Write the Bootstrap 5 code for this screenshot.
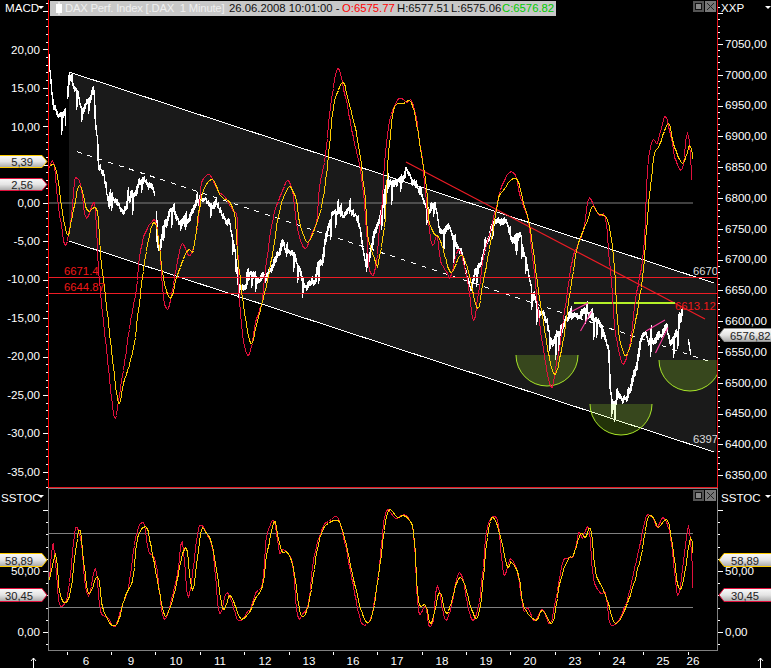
<!DOCTYPE html>
<html lang="de">
<head>
<meta charset="utf-8">
<title>DAX Perf. Index</title>
<link href="https://cdn.jsdelivr.net/npm/bootstrap@5.3.0/dist/css/bootstrap.min.css" rel="stylesheet">
<style>
html,body{margin:0;padding:0;background:#000;overflow:hidden}
body{font-family:"Liberation Sans",Arial,sans-serif}
.terminal{width:771px;height:668px;background:#000;color:#fff}
.terminal svg{display:block}
.pane-top{height:488px}
.pane-low{height:163px}
.scale-left{width:48px;flex:none}
.scale-right{width:53px;flex:none}
.plot-top{width:670px;flex:none;border-left:1px solid #f00;border-right:1px solid #e4141e;border-bottom:1px solid #e4141e}
.plot-low{width:670px;flex:none;border:1px solid #808080}
.time-axis{height:17px}
.info-bar{top:1px;left:1px;height:15px;width:506px;background:#c8c8c8;font-size:11.3px;line-height:15px;white-space:pre;color:#111}
.info-bar svg{flex:none;margin-left:6px;margin-right:2px}
.seg-name{width:164px;flex:none;color:#efefef;letter-spacing:-.22px}
.seg-date{width:113px;flex:none}
.seg-open{width:55px;flex:none;color:#f00}
.seg-high{width:54px;flex:none}
.seg-low{width:51px;flex:none}
.seg-close{color:#0c0}
.win-btns{top:1px;right:1px;gap:1px}
.ax{font-family:"Liberation Sans",Arial,sans-serif;font-size:11.6px;fill:#fff}
.ax-l{text-anchor:end}
.tag-t{font-family:"Liberation Sans",Arial,sans-serif;font-size:11.2px;fill:#222}
.note{font-family:"Liberation Sans",Arial,sans-serif;font-size:11.3px}
.note-r{fill:#f01818}
.note-w{fill:#ddd}
.crisp{shape-rendering:crispEdges}
.osc{stroke-linejoin:round}
</style>
</head>
<body>
<main class="terminal d-flex flex-column">
  <section class="pane-top d-flex">
    <aside class="scale-left">
      <svg width="48" height="488" viewBox="0 0 48 488">
        <defs>
          <linearGradient id="tg" x1="0" y1="0" x2="0" y2="1"><stop offset="0" stop-color="#fafafa"/><stop offset="0.5" stop-color="#e4e4e4"/><stop offset="1" stop-color="#a8a8a8"/></linearGradient>
        </defs>
        <g id="tL1" class="crisp" stroke="#fff" stroke-width="1"></g>
        <text class="ax" x="5" y="12">MACD</text>
        <path d="M38 6h6l-3 3z" fill="#fff"/>
        <text class="ax ax-l" x="40" y="54">20,00</text>
        <text class="ax ax-l" x="40" y="92">15,00</text>
        <text class="ax ax-l" x="40" y="131">10,00</text>
        <text class="ax ax-l" x="40" y="207">0,00</text>
        <text class="ax ax-l" x="40" y="245">-5,00</text>
        <text class="ax ax-l" x="40" y="283">-10,00</text>
        <text class="ax ax-l" x="40" y="322">-15,00</text>
        <text class="ax ax-l" x="40" y="360">-20,00</text>
        <text class="ax ax-l" x="40" y="399">-25,00</text>
        <text class="ax ax-l" x="40" y="437">-30,00</text>
        <text class="ax ax-l" x="40" y="476">-35,00</text>
        <path d="M-1 155.5H42L47 161.5 42 167.5H-1Z" fill="url(#tg)" stroke="#ffcc00"/>
        <text class="tag-t ax-l" x="33" y="166">5,39</text>
        <path d="M-1 178.5H42L47 184.5 42 190.5H-1Z" fill="url(#tg)" stroke="#e0103c"/>
        <text class="tag-t ax-l" x="33" y="189">2,56</text>
      </svg>
    </aside>
    <div class="plot-top position-relative">
      <svg width="668" height="487" viewBox="49 0 668 487">
        <polygon points="69,72 716,283.5 716,452.5 69,241" fill="#1a1a1a"/>
        <g fill="none">
          <path d="M49 203H693" stroke="#808080"/>
          <path id="px" stroke="#fff" stroke-width="1.7" class="crisp"/>
          <path d="M69 72L714 283" stroke="#fff" stroke-width="1" class="crisp"/>
          <path d="M69 241L714 452" stroke="#fff" stroke-width="1" class="crisp"/>
          <path d="M77 151.6L714 363" stroke="#fff" stroke-width="1" stroke-dasharray="5 6" class="crisp"/>
          <path d="M49 277.5H717M49 293.5H717" stroke="#ee1c25" class="crisp"/>
          <path d="M406 162L705 319" stroke="#ee1c25" stroke-width="1.2"/>
          <path d="M516 355H578A31 31 0 0 1 516 355Z" fill="#adff2f" fill-opacity=".2" stroke="none"/>
          <path d="M516 355A31 31 0 0 0 578 355" stroke="#a8e628"/>
          <path d="M590 404H652A31 31 0 0 1 590 404Z" fill="#adff2f" fill-opacity=".2" stroke="none"/>
          <path d="M590 404A31 31 0 0 0 652 404" stroke="#a8e628"/>
          <path d="M659 360H721A31 31 0 0 1 659 360Z" fill="#adff2f" fill-opacity=".2" stroke="none"/>
          <path d="M659 360A31 31 0 0 0 721 360" stroke="#a8e628"/>
          <path d="M574 302.500H675" stroke="#b4f028" stroke-width="2" class="crisp"/>
          <path d="M571.5 311.5L588 303M580.5 331L591.5 311.5M646 331L665 320M655.5 353L668 327.5" stroke="#ff3ca0" stroke-width="1.1"/>
          <path id="rm" stroke="#e0103c" stroke-width="1" class="crisp osc"/>
          <path id="ym" stroke="#ffcc00" stroke-width="1" class="crisp osc"/>
        </g>
        <text class="note note-r" x="64" y="275">6671.4</text>
        <text class="note note-r" x="64" y="291">6644.87</text>
        <text class="note note-r" x="675" y="310">6613.12</text>
        <text class="note note-w" x="693" y="275">6670</text>
        <text class="note note-w" x="693" y="443">6397</text>
      </svg>
      <div class="info-bar position-absolute d-flex align-items-center">
        <svg width="7" height="13" viewBox="0 0 7 13"><path d="M3 0V13" stroke="#fff"/><rect x="0" y="2" width="6" height="9" fill="#fff"/></svg>
        <span class="seg-name">DAX Perf. Index [.DAX  1 Minute]</span>
        <span class="seg-date">26.06.2008 10:01:00 - </span>
        <span class="seg-open">O:6575.77</span>
        <span class="seg-high">H:6577.51</span>
        <span class="seg-low">L:6575.06</span>
        <span class="seg-close">C:6576.82</span>
      </div>
      <div class="win-btns position-absolute d-flex">
        <svg width="11" height="11" viewBox="0 0 11 11"><rect width="11" height="11" fill="#555"/><rect x="2.5" y="2.5" width="6" height="6" fill="#888" stroke="#111"/></svg>
        <svg width="11" height="11" viewBox="0 0 11 11"><rect width="11" height="11" fill="#777"/><path d="M2 2L9 9M9 2L2 9" stroke="#222"/></svg>
      </div>
    </div>
    <aside class="scale-right">
      <svg width="53" height="488" viewBox="718 0 53 488">
        <g id="tR1" class="crisp" stroke="#fff" stroke-width="1"></g>
        <text class="ax" x="721" y="12">XXP</text>
        <path d="M765 6h6l-3 3z" fill="#fff"/>
        <text class="ax" x="725" y="48">7050,00</text>
        <text class="ax" x="725" y="79">7000,00</text>
        <text class="ax" x="725" y="109">6950,00</text>
        <text class="ax" x="725" y="140">6900,00</text>
        <text class="ax" x="725" y="171">6850,00</text>
        <text class="ax" x="725" y="202">6800,00</text>
        <text class="ax" x="725" y="233">6750,00</text>
        <text class="ax" x="725" y="263">6700,00</text>
        <text class="ax" x="725" y="294">6650,00</text>
        <text class="ax" x="725" y="325">6600,00</text>
        <text class="ax" x="725" y="356">6550,00</text>
        <text class="ax" x="725" y="387">6500,00</text>
        <text class="ax" x="725" y="417">6450,00</text>
        <text class="ax" x="725" y="448">6400,00</text>
        <text class="ax" x="725" y="479">6350,00</text>
        <path d="M772 328.5H724L719 335 724 341.5H772Z" fill="url(#tg)" stroke="#909090"/>
        <text class="tag-t" x="730" y="339.5">6576,82</text>
      </svg>
    </aside>
  </section>
  <section class="pane-low d-flex">
    <aside class="scale-left">
      <svg width="48" height="163" viewBox="0 488 48 163">
        <g id="tL2" class="crisp" stroke="#fff" stroke-width="1"></g>
        <text class="ax" x="1" y="502">SSTOC</text>
        <path d="M38 495h6l-3 3z" fill="#fff"/>
        <text class="ax ax-l" x="40" y="575">50,00</text>
        <text class="ax ax-l" x="40" y="636">0,00</text>
        <path d="M-1 553.5H42L47 560 42 566.5H-1Z" fill="url(#tg)" stroke="#ffcc00"/>
        <text class="tag-t ax-l" x="33" y="564.5">58,89</text>
        <path d="M-1 588.5H42L47 595 42 601.5H-1Z" fill="url(#tg)" stroke="#e0103c"/>
        <text class="tag-t ax-l" x="33" y="599.5">30,45</text>
      </svg>
    </aside>
    <div class="plot-low position-relative">
      <svg width="668" height="161" viewBox="49 489 668 161">
        <g fill="none">
          <path d="M49 533.5H693M49 607.5H693" stroke="#808080" class="crisp"/>
          <path id="rs" stroke="#e0103c" stroke-width="1" class="crisp osc"/>
          <path id="ys" stroke="#ffcc00" stroke-width="1" class="crisp osc"/>
        </g>
      </svg>
      <div class="win-btns position-absolute d-flex">
        <svg width="11" height="11" viewBox="0 0 11 11"><rect width="11" height="11" fill="#555"/><rect x="2.5" y="2.5" width="6" height="6" fill="#888" stroke="#111"/></svg>
        <svg width="11" height="11" viewBox="0 0 11 11"><rect width="11" height="11" fill="#777"/><path d="M2 2L9 9M9 2L2 9" stroke="#222"/></svg>
      </div>
    </div>
    <aside class="scale-right">
      <svg width="53" height="163" viewBox="718 488 53 163">
        <g id="tR2" class="crisp" stroke="#fff" stroke-width="1"></g>
        <text class="ax" x="721" y="502">SSTOC</text>
        <path d="M765 495h6l-3 3z" fill="#fff"/>
        <text class="ax" x="725" y="575">50,00</text>
        <text class="ax" x="725" y="636">0,00</text>
        <path d="M772 553.5H724L719 560 724 566.5H772Z" fill="url(#tg)" stroke="#ffcc00"/>
        <text class="tag-t" x="731" y="564.5">58,89</text>
        <path d="M772 588.5H724L719 595 724 601.5H772Z" fill="url(#tg)" stroke="#e0103c"/>
        <text class="tag-t" x="731" y="599.5">30,45</text>
      </svg>
    </aside>
  </section>
  <footer class="time-axis">
    <svg width="771" height="17" viewBox="0 651 771 17">
      <path class="crisp" stroke="#fff" d="M67.5 652v3M111.5 652v3M155.5 652v3M200.5 652v3M244.5 652v3M289.5 652v3M333.5 652v3M377.5 652v3M422.5 652v3M466.5 652v3M510.5 652v3M555.5 652v3M599.5 652v3M643.5 652v3M688.5 652v3"/>
      <g text-anchor="middle">
        <text class="ax" x="86" y="665">6</text>
        <text class="ax" x="131" y="665">9</text>
        <text class="ax" x="176" y="665">10</text>
        <text class="ax" x="220" y="665">11</text>
        <text class="ax" x="265" y="665">12</text>
        <text class="ax" x="309" y="665">13</text>
        <text class="ax" x="353" y="665">16</text>
        <text class="ax" x="397" y="665">17</text>
        <text class="ax" x="442" y="665">18</text>
        <text class="ax" x="486" y="665">19</text>
        <text class="ax" x="530" y="665">20</text>
        <text class="ax" x="575" y="665">23</text>
        <text class="ax" x="619" y="665">24</text>
        <text class="ax" x="663" y="665">25</text>
        <text class="ax" x="693" y="665">26</text>
      </g>
      <path d="M33.5 668V658M31 661l2.5-3 2.5 3M760.5 668V658M758 661l2.5-3 2.5 3" fill="none" stroke="#fff"/>
    </svg>
  </footer>
</main>
<script src="https://cdn.jsdelivr.net/npm/bootstrap@5.3.0/dist/js/bootstrap.bundle.min.js"></script>
<script>
(function(){
  /* Catmull-Rom through the traced points, snapped to whole pixels */
  function curve(a){
    var n=a.length/2,s='',px=null,py=null;
    function X(i){return a[2*Math.max(0,Math.min(n-1,i))];}
    function Y(i){return a[2*Math.max(0,Math.min(n-1,i))+1];}
    function cr(p0,p1,p2,p3,t){return 0.5*((2*p1)+(-p0+p2)*t+(2*p0-5*p1+4*p2-p3)*t*t+(-p0+3*p1-3*p2+p3)*t*t*t);}
    for(var i=0;i<n-1;i++){
      var steps=Math.max(1,Math.round((X(i+1)-X(i))/1.5));
      for(var k=0;k<steps;k++){
        var t=k/steps;
        var x=Math.round(cr(X(i-1),X(i),X(i+1),X(i+2),t))+.5;
        var y=Math.round(cr(Y(i-1),Y(i),Y(i+1),Y(i+2),t))+.5;
        if(x===px&&y===py)continue;
        s+=(s?'L':'M')+x+' '+y;px=x;py=y;
      }
    }
    return s+'L'+X(n-1)+' '+Y(n-1);
  }
  function set(id,a){document.getElementById(id).setAttribute('d',curve(a));}

  set('rm',[49,168,52,160,55,175,58,205,62,232,65,245,70,225,72,205,74,180,77,178,80,185,83,205,86,218,90,210,94,202,96,225,97,250,100,290,103,320,107,360,110,390,113,415,116,415,119,395,123,370,130,320,135,295,140,250,145,232,150,223,155,220,158,240,160,253,163,297,167,309,170,300,177,260,182,243,188,255,192,250,197,227,200,190,203,178,210,175,217,190,225,197,232,210,237,220,238,287,240,313,242,333,247,355,252,343,255,322,262,300,265,270,273,217,282,190,288,180,293,197,295,215,300,240,305,248,310,237,317,217,318,195,325,153,330,107,337,68,345,97,353,137,360,170,365,218,368,263,372,275,375,267,380,220,383,180,388,127,395,103,400,98,407,102,410,99,415,113,420,147,423,170,427,216,432,245,437,235,440,260,447,273,450,277,457,250,462,257,468,287,473,320,478,293,483,257,490,230,495,210,500,190,508,173,515,175,520,197,528,220,530,237,535,280,540,330,550,386,555,370,563,320,572,260,582,233,585,218,589,197,595,210,600,215,605,218,610,270,613,313,617,343,623,364,630,340,635,300,642,260,645,218,648,157,653,139,657,143,663,119,667,120,673,150,677,165,682,168,687,132,690,157,692,180]);
  set('ym',[49,166,55,167,60,200,63,220,68,235,72,215,79,185,87,210,95,207,98,220,100,253,105,295,112,360,118,403,123,383,133,347,140,293,147,243,155,223,163,277,170,298,177,275,187,250,193,250,197,220,203,190,212,179,220,195,230,203,235,220,237,253,243,303,250,343,257,321,267,280,273,247,278,215,283,197,290,186,297,205,298,217,307,242,317,220,322,200,327,167,333,107,342,82,348,100,357,140,365,200,367,233,375,262,378,262,385,217,387,167,393,110,403,103,411,102,418,133,427,197,428,217,433,232,440,240,450,272,460,255,467,267,477,308,483,280,493,227,498,197,503,190,510,180,517,180,523,203,528,220,530,230,540,303,553,373,562,343,570,290,577,247,587,220,592,206,598,213,607,220,613,257,618,330,626,355,635,320,642,277,647,220,653,157,658,147,668,123,673,143,682,163,689,145,693,159]);
  set('rs',[49,580,52,545,53,543,57,587,60,606,67,595,72,550,75,527,80,537,83,567,88,596,95,568,100,610,107,617,115,626,122,603,128,588,135,537,143,522,148,550,155,562,163,617,170,603,177,573,182,541,188,597,198,528,208,537,213,553,219,613,227,592,238,620,248,610,250,610,255,593,262,583,265,543,271,521,275,525,279,553,283,549,292,563,297,615,302,614,308,602,313,560,322,527,328,521,337,517,343,537,350,570,360,620,370,618,377,580,385,513,395,518,405,515,413,533,418,610,425,605,428,625,433,620,437,585,444,618,450,610,457,575,462,577,467,603,473,620,480,593,487,527,497,520,503,574,510,558,517,573,523,610,527,607,534,620,542,609,550,623,558,583,563,560,573,555,578,532,582,538,588,527,593,577,600,593,605,592,608,617,613,625,625,605,637,555,645,518,652,517,657,527,663,517,670,537,676,589,680,587,688,525,693,588]);
  set('ys',[49,580,55,553,58,583,63,602,70,590,78,530,82,550,88,593,97,576,103,610,115,625,125,595,132,580,137,538,146,527,152,555,157,580,164,615,172,600,185,547,192,590,200,533,205,531,213,550,222,608,230,595,240,618,250,610,255,598,262,585,267,550,273,522,276,527,281,550,287,552,293,567,300,614,308,605,315,560,323,528,337,520,343,533,352,573,363,617,371,617,378,577,387,513,397,517,405,516,413,532,418,600,425,605,431,623,439,592,447,613,460,577,477,617,488,528,496,522,507,567,510,561,518,575,523,605,535,620,542,610,552,622,560,580,568,558,573,555,580,533,585,537,590,528,595,570,603,590,608,603,615,623,627,603,640,558,647,518,653,518,658,527,667,520,673,553,678,587,683,580,690,537,693,553]);

  /* Minute prices: traced midline plus seeded tick noise */
  var segs=[
   [49,68,50,72,51,85,53,105,56,112,58,118,61,112,66,110],
   [67,95,69,73,72,84,76,90,79,103,82,112,86,100,90,96,93,89,94,98,95,125,97,140,98,170,100,170,103,175,106,195,108,210,110,195,115,197,120,205,125,205,130,195,135,190,140,177,145,178,150,185,155,190],
   [156,206,157,240,160,238,165,220,172,212,178,218,185,225,190,212,200,197,210,205,220,210,230,225,235,250,238,290,245,285,250,270,258,275,265,277,272,265,278,258,282,243,285,255,292,250,298,260,306,285,314,280,318,265,322,260,325,240,330,220,335,207,345,212,355,213,360,225,362,245,366,270,372,240,380,215,385,190,395,183,402,178,405,168,408,172,412,185,420,195,428,210,435,205,440,230,450,230,462,255,470,285,480,265,488,240,495,225,505,218,512,240,520,235,528,270,532,300,538,310,545,320,552,345,556,335,563,325,570,320,578,315,585,308,590,315,597,320,603,330,608,345,610,390,613,400,618,395,625,395,630,385,636,375,640,345,645,335,652,345,657,335,665,325,670,340,678,335,680,320,683,307],
   [688,345,690,352,691,355]
  ];
  var seed=20080626;
  function rnd(){seed=(seed*1664525+1013904223)>>>0;return seed/4294967296;}
  var d='',w=0;
  segs.forEach(function(a){
    var first=true;
    for(var i=0;i<a.length-2;i+=2){
      for(var x=a[i];x<a[i+2];x++){
        var t=(x-a[i])/(a[i+2]-a[i]),y=a[i+1]+(a[i+3]-a[i+1])*t;
        w=w*.82+(rnd()-.5)*6.5;
        y+=w;
        var up=.5+rnd()*3.5,dn=.5+rnd()*3.5;
        if(rnd()<0.09){dn+=6+rnd()*15;}
        else if(rnd()<0.07){up+=4+rnd()*8;}
        d+=(first?'M':'L')+(x+.5)+' '+(y-up).toFixed(1)+'L'+(x+.5)+' '+(y+dn).toFixed(1);
        first=false;
      }
    }
  });
  document.getElementById('px').setAttribute('d',d);

  /* Scale ticks */
  function ticks(id,y0,step,from,to){
    var s='';
    for(var i=from;i<=to;i++){
      var y=Math.round(y0+i*step/5)+.5,len=(i%5===0)?5:2;
      var xa=id.charAt(1)==='L'?48-len:718;
      s+='<path d="M'+xa+' '+y+'h'+len+'"/>';
    }
    document.getElementById(id).innerHTML=s;
  }
  ticks('tL1',203,38.4,-30,45);
  ticks('tR1',198,30.8,-31,45);
  ticks('tL2',632,61,-10,2);
  ticks('tR2',632,61,-10,2);
})();
</script>
</body>
</html>
